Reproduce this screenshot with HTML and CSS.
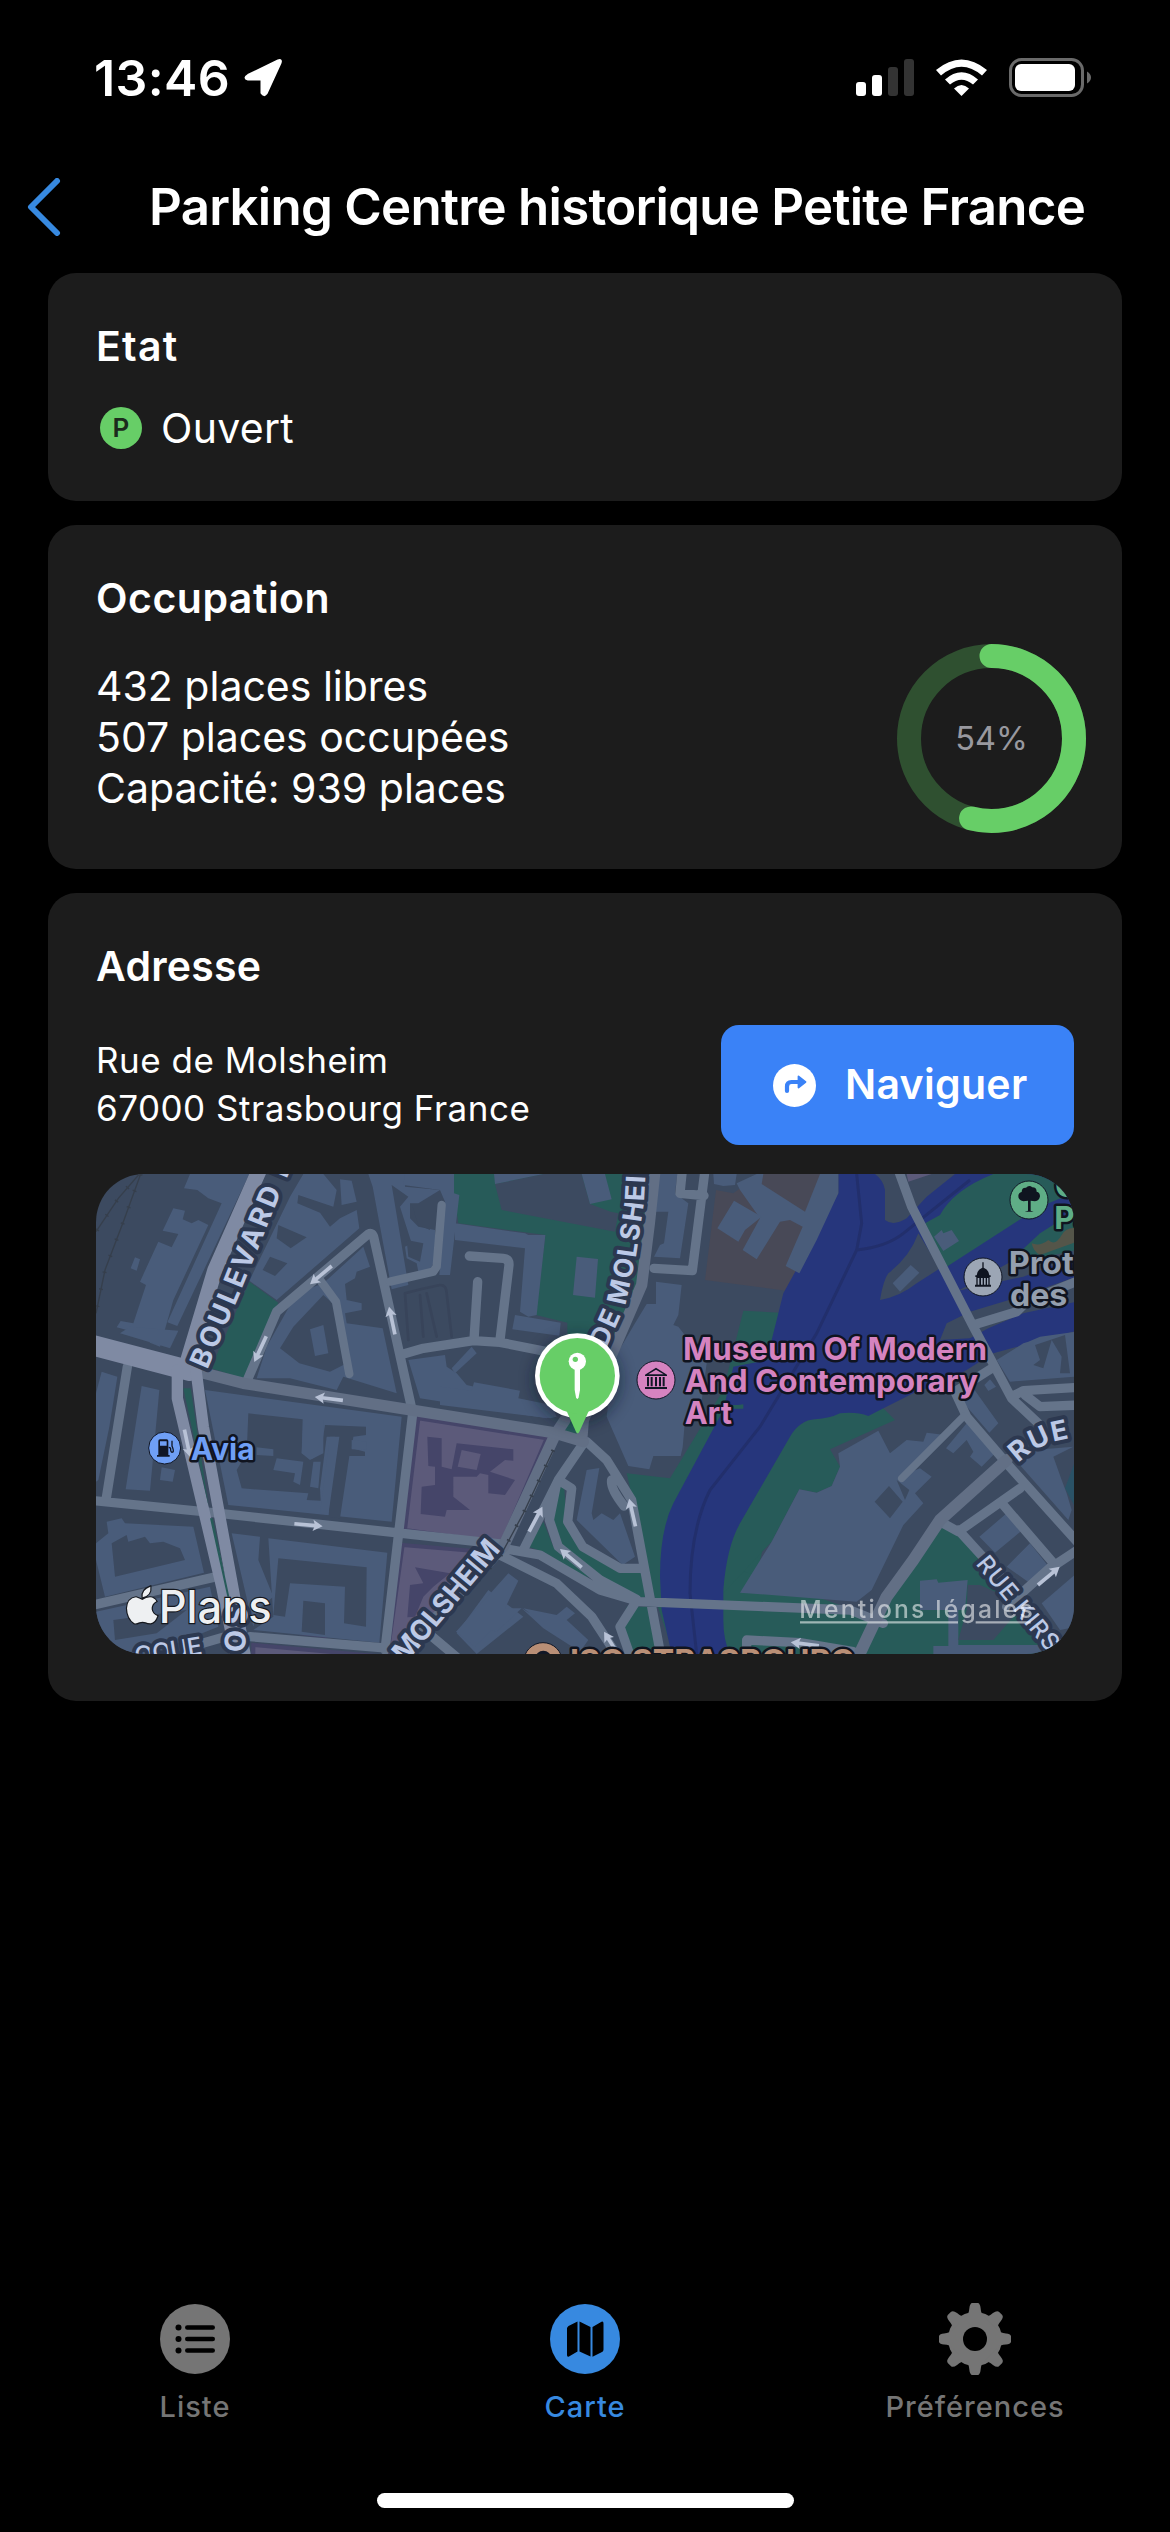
FILE: index.html
```html
<!DOCTYPE html>
<html lang="fr">
<head>
<meta charset="utf-8">
<title>Parking Centre historique Petite France</title>
<link rel="stylesheet" href="styles.css">
</head>
<body>
<header class="status">
  <div class="status-left">
    <span class="time">13:46</span>
    <svg class="location" viewBox="0 0 39 39"><path d="M4 17 34 2.500Q38 1 36.500 5L22.500 35.500Q20 39 17.500 35V21.500H4Q-1 20 4 17Z" fill="#fff" stroke="#fff" stroke-width="2" stroke-linejoin="round"/></svg>
  </div>
  <svg class="indicators" viewBox="0 0 236 40">
    <g fill="#fff"><rect x="0" y="24" width="10" height="14" rx="3"/><rect x="16" y="17" width="10" height="21" rx="3"/></g>
    <g fill="#333"><rect x="32" y="9" width="10" height="29" rx="3"/><rect x="48" y="1" width="10" height="37" rx="3"/></g>
    <g fill="#fff">
      <path d="M80 12Q105.500-9 131 12L126 17.500Q105.500 0 85 17.500Z"/>
      <path d="M89 21.500Q105.500 7 122 21.500L117 26.500Q105.500 17 94 26.500Z"/>
      <path d="M98 30.500Q105.500 23.500 113 30.500L105.500 38Z"/>
    </g>
    <rect x="154.500" y="1.500" width="72" height="36" rx="11" fill="none" stroke="#6a6a6a" stroke-width="3"/>
    <rect x="159" y="6" width="60" height="27" rx="6" fill="#fff"/>
    <path d="M231 13.500Q235 16 235 19.500T231 25.500Z" fill="#6a6a6a"/>
  </svg>
</header>

<nav class="navbar">
  <svg class="back" viewBox="0 0 34 58"><path d="M30 3 4 29 30 55" fill="none" stroke="#3789e0" stroke-width="6" stroke-linecap="round" stroke-linejoin="round"/></svg>
  <h1 class="title"><span>Parking Centre historique Petite France</span></h1>
</nav>

<main class="cards">
  <section class="card card-state">
    <h2 class="heading heading-state">Etat</h2>
    <div class="state">
      <span class="badge">P</span>
      <span class="state-label">Ouvert</span>
    </div>
  </section>

  <section class="card card-usage">
    <div class="usage">
      <h2 class="heading">Occupation</h2>
      <p class="figures">432 places libres<br>507 places occupées<br>Capacité: 939 places</p>
    </div>
    <div class="gauge">
      <svg viewBox="0 0 189 189">
        <circle cx="94.500" cy="94.500" r="82.500" fill="none" stroke="#2f5030" stroke-width="24"/>
        <circle cx="94.500" cy="94.500" r="82.500" fill="none" stroke="#67ce67" stroke-width="24" stroke-linecap="round" pathLength="100" stroke-dasharray="54 100" transform="rotate(-90 94.500 94.500)"/>
      </svg>
      <span class="gauge-value">54%</span>
    </div>
  </section>

  <section class="card card-address">
    <h2 class="heading heading-address">Adresse</h2>
    <div class="address-row">
      <p class="address">Rue de Molsheim<br>67000 Strasbourg France</p>
      <button class="navigate">
        <svg viewBox="0 0 43 43"><circle cx="21.500" cy="21.500" r="21.500" fill="#fff"/><path d="M14 27V22.500Q14 18 18.500 18H26" fill="none" stroke="#3a82f7" stroke-width="4.200" stroke-linecap="round"/><path d="M25.500 12.500 32.500 18 25.500 23.500Z" fill="#3a82f7" stroke="#3a82f7" stroke-width="1.800" stroke-linejoin="round"/></svg>
        <span>Naviguer</span>
      </button>
    </div>
    <svg class="map" viewBox="18 42 2934 1440">
      <defs>
        <g id="way"><path d="M-42 0H22" stroke="#b8c2d6" stroke-width="11" fill="none"/><path d="M14-17 43 0 14 17 20 0Z" fill="#b8c2d6"/></g>
        <filter id="soft" x="-50%" y="-50%" width="200%" height="200%"><feGaussianBlur stdDeviation="22"/></filter>
      </defs>
      <rect x="18" y="42" width="2934" height="1440" fill="#3c4a60"/>

      <!-- parks, water and campus areas -->
      <g fill="#275b59">
        <path d="M478 365 565 428 460 655 362 625Z"/>
        <g transform="translate(1050 0)">
          <path d="M42 42H640L600 400 520 600 382 520V488L288 465 316 225 55 190 42 100Z"/>
          <path d="M910 452 1090 462 1080 650 900 1480H700L640 1300 560 940 690 955 850 690Z"/>
          <path d="M345 985 372 975 380 1085 430 1170 540 1240 600 1235 625 1310 590 1315 490 1255 355 1155 330 1080Z"/>
          <path d="M265 1160 310 1085 340 1160 460 1255 420 1245 310 1175Z"/>
          <path d="M560 1340H640L670 1482H570L540 1400Z"/>
          <path d="M840 1250 900 1230 1300 1370V1482H840Z"/>
          <path d="M370 780 430 790 413 835 362 815Z"/>
        </g>
        <g transform="translate(1950 0)">
          <path d="M-60 1310 95 1145 178 988 230 998 275 978 300 920 270 868 465 780 430 745 340 700 0 900Z"/>
          <path d="M600 1095 660 1130 980 1482H350L440 1310Z"/>
        </g>
      </g>
      <g transform="translate(1050 0)" fill="#3c4a60">
        <path d="M165 72 310 42H425L450 132 512 155 535 160 525 215 185 150Z"/>
      </g>
      <g transform="translate(1950 0)">
        <path d="M-72 90-20 100 60 42H295V100L160 395-105 360Z" fill="#484957"/>
        <path d="M295 42V100L130 400 95 540 85 600-20 620-50 750-200 1030Q-240 1110-240 1250L-235 1350-205 1482H-30Q-50 1440-50 1380V1290Q-40 1160 0 1090L150 830Q180 780 225 778 270 775 300 760 350 755 385 768 480 720 520 700L640 655 760 580 1010 512V42Z" fill="#26367c"/>
        <path d="M350 42 365 190 350 270 230 520 60 800-90 990Q-150 1110-150 1300L-130 1482M350 270Q440 260 490 220L690 60" fill="none" stroke="#222f6c" stroke-width="9"/>
        <g fill="#3c4a60">
          <path d="M405 42H645L560 110 500 175Q460 200 435 180V90Q430 60 405 42Z"/>
          <path d="M535 220 600 325 530 370Q480 410 420 420 430 360 445 340 510 290 535 220Z"/>
          <path d="M600 540 620 490 690 455 840 410 1010 350V425L850 460 745 505 690 535Z"/>
          <path d="M655 392 840 290 1010 255V290L850 350Z"/>
        </g>
        <path d="M500 42H575L505 65Z" fill="#5c5a7a"/>
        <g fill="#275b59">
          <path d="M760 42H1010V95L900 140 620 320 555 190 600 165Q640 90 760 42Z"/>
          <path d="M830 285 900 220 1010 150V270L830 310Z"/>
        </g>
        <path d="M875 250Q900 260 925 240 945 260 965 225 980 200 1010 205V245L900 285Q880 275 875 250Z" fill="#545549"/>
        <path d="M-5 735 10 733V746L-55 746V735Z" fill="#275b59"/>
        <path d="M975 985 1010 890V1050Z" fill="#2a5266"/>
      </g>
      <g fill="#5c5a7a" stroke="#454569" stroke-width="12">
        <path d="M985 775 1370 835 1235 1150 945 1110Z"/>
        <path d="M938 1155 1235 1180 940 1500H890Z"/>
        <path d="M490 1455 880 1490H490Z"/>
      </g>
      <g fill="#454569">
        <path d="M1012 830 1055 835V920L1085 928 1100 850 1270 868V902L1245 900 1200 935 1275 960 1245 1005 1195 1000V945L1170 940 1160 950H1090V1010L1140 1050H1070L1065 1070 992 1062 995 980 1035 975V920L1015 918Z"/>
        <path d="M975 1222 1080 1240 1030 1280 1000 1310 975 1370 952 1372 960 1275 1000 1270Z"/>
        <path d="M630 1425 710 1400V1435ZM785 1395 825 1350V1398Z"/>
      </g>
      <path d="M1115 870 1172 882 1160 930 1103 920Z" fill="#5c5a7a"/>

      <!-- railway -->
      <path d="M148 42 85 115 18 215M152 42 102 180 45 330 18 460" fill="none" stroke="#363f4c" stroke-width="4"/>
      <path d="M148 42 85 115 18 215M152 42 102 180 45 330 18 460" fill="none" stroke="#363f4c" stroke-width="12" stroke-dasharray="4 48"/>

      <!-- buildings -->
      <g fill="#495c7a">
        <path d="M300 42H478L262 498 232 487 395 130 355 115 322 90 282 85Z"/>
        <path d="M250 145 285 152 278 178 305 190 325 180 355 195 250 420 210 560 180 548 165 525 80 502 92 483 130 490 168 375 150 365 205 245 245 262 265 222 218 212Z"/>
        <path d="M135 292 150 298 140 332 122 325Z"/>
        <path d="M120 500 265 512 240 565 90 520Z"/>
        <path d="M640 42H700L740 90 730 140 625 105 622 130 690 158 720 200 750 175 800 150 808 205 560 420 478 362 600 110Z"/>
        <path d="M750 58 785 62 800 125 755 135Z"/>
        <path d="M835 42H945V80L1050 90 985 130H960V175L985 200 1035 210 1040 290 1020 330 985 335 980 310 950 295 945 260 965 250 930 140 955 110 905 75 955 375 905 388 848 80Z"/>
        <path d="M945 42H1092V100L1108 105 1080 345 1048 345 1065 125 1050 90 940 75Z"/>
        <path d="M820 260 840 320 800 335 795 355 765 372 770 420 815 430V450L765 460 770 490 878 505 920 700 760 650 740 690 600 655 500 655 530 560 620 400 700 370Z"/>
        <path d="M955 600 1065 585 1070 620 1100 640 1130 675 1240 700 1380 760 1370 775 990 715Z"/>
        <path d="M1085 625 1145 560 1160 580 1095 640Z"/>
        <path d="M345 690 935 770 905 1085 415 1035Z"/>
        <path d="M35 635 82 650 58 800 25 960 18 965V700Z"/>
        <path d="M155 678 208 690 180 992 107 988Z"/>
        <path d="M215 922 255 930 248 965 210 960Z"/>
        <path d="M50 1085 95 1075 105 1090 310 1100 342 1238 45 1310 18 1200V1150L55 1120Z"/>
        <path d="M425 1120 510 1130 505 1200 550 1310 500 1350 490 1400Z"/>
        <path d="M535 1135 892 1178 868 1448 490 1410 550 1370Z"/>
        <path d="M18 1355 360 1280 385 1400 180 1482H60L18 1420Z"/>
        <path d="M1100 1420 1195 1290 1300 1370 1160 1482Z"/>
      </g>
      <g fill="#3c4a60">
        <path d="M475 760 638 778 635 880 665 897 692 880 705 795 828 800V825L790 830 785 865 825 875V888L778 888 750 1075 715 1070 735 830H710L690 985 692 1022 650 1020 655 1000 455 985 440 930 470 880Z"/>
        <path d="M565 195 650 232 602 265 560 235Z"/>
        <path d="M540 290 592 310 555 348 518 330Z"/>
        <path d="M610 500 700 405 740 440 770 610 720 635 628 610 570 565Z"/>
        <path d="M965 132H1020V210L985 195ZM950 240 1000 250 990 305 955 290Z"/>
        <path d="M65 1150 110 1125 115 1145 165 1130 180 1150 220 1145 270 1165 285 1200 75 1250Z"/>
        <path d="M565 1195 830 1222 828 1400 762 1390 765 1280 600 1270 585 1370 550 1365Z"/>
        <path d="M640 1322 705 1330V1425L635 1415Z"/>
        <path d="M70 1380 290 1350 200 1420 75 1440Z"/>
      </g>
      <g fill="#495c7a">
        <path d="M640 780H700V880L660 900 635 880ZM720 830H748L715 1065 690 1060ZM785 840 830 845V870L785 868ZM560 895 640 905 630 975 610 965 615 940 550 930ZM670 905H692L685 985 660 980ZM500 862 550 868V888L500 885Z"/>
        <path d="M660 508 700 495 715 580 675 588Z"/>
      </g>
      <g transform="translate(1050 0)" fill="#495c7a">
        <path d="M162 42H310L165 72ZM425 42H495L515 118 450 132Z"/>
        <path d="M45 190 255 220 265 225H316L290 465 265 470 240 455 255 265 45 240Z"/>
        <path d="M410 290 474 297 465 413 399 405Z"/>
        <path d="M225 465 362 488 358 527 217 508Z"/>
        <path d="M0 680 95 692 102 667 240 692 235 715 335 735 350 770 330 775 0 735Z"/>
        <path d="M650 42H712L705 100 745 130 720 295 642 290 660 255 672 250 685 155H640Z"/>
        <path d="M820 42H890L885 75 850 78 822 72Z"/>
        <path d="M648 365 725 375 715 465 700 495 715 500 800 610 780 760 735 780 728 862 722 888 640 888 628 928 565 918 500 770 520 600 585 490 620 432H648Z"/>
        <path d="M440 930 478 924 455 1060 460 1080 485 1060 520 1080 540 1060 585 1190 548 1215 410 1080Z"/>
        <path d="M205 1240 235 1262 195 1345 245 1345 270 1360 250 1345 350 1365 380 1340 405 1360 380 1380 445 1440 420 1475 310 1405 245 1345 170 1415 155 1410 105 1460 48 1415Z"/>
        <path d="M905 1298 1000 1205V1300Z"/>
      </g>
      <g transform="translate(1950 0)" fill="#495c7a">
        <path d="M60 42H295V100L230 240 178 340 137 318 188 200 150 180 120 185 50 298 8 270 60 175 0 90-10 70 50 42Z"/>
        <path d="M-18 122 65 170 15 210-5 245-68 205Z"/>
        <path d="M512 315 538 338 480 395 458 370Z"/>
        <path d="M582 230 605 210 610 220 635 210 657 243 610 273Z"/>
        <path d="M770 600 850 550 865 545 900 530 1010 515V650L810 665Z"/>
        <path d="M733 675 750 658 768 680 745 693ZM665 722 700 685 775 790 748 818Z"/>
        <path d="M415 812 450 880 500 840 550 845 560 818 615 825 490 945 540 925 575 950 525 1000 550 1030 490 1095 395 1290 350 1325 0 1298 95 1145 178 988 230 998 275 978 300 920 295 880Z"/>
        <path d="M680 790 765 880 725 920 690 890 700 875 680 840 640 880 618 865Z"/>
        <path d="M835 910 880 870 1000 860 940 890 965 960 980 1000 995 1050 985 1080Z"/>
        <path d="M800 1060 845 1112 765 1178 718 1130ZM870 1150 930 1225 870 1270 800 1220Z"/>
        <path d="M905 1330 1010 1240V1400L960 1410Z"/>
        <path d="M540 1262 590 1258 595 1268 683 1260 675 1350H540ZM625 1350H655V1455H900L960 1482H580V1458H625Z"/>
      </g>
      <g transform="translate(1950 0)" fill="#3c4a60">
        <path d="M447 978 488 1025 450 1075 404 1025ZM470 960 508 990 495 1020Z"/>
        <path d="M885 555 900 600 880 615 910 625 935 540 965 590 960 640 990 640 975 525Z"/>
        <path d="M683 1275 720 1275 820 1320 820 1370 760 1440 655 1440 680 1350Z"/>
        <path d="M70 42 65 72 195 155 240 42Z" fill="#484957"/>
      </g>

      <!-- streets -->
      <g class="streets" stroke="#65748a" stroke-width="28">
        <path d="M112 620 48 1020M10 1022 340 1055 1230 1152M968 760 885 1470M480 1430 900 1465M10 1335 370 1252M330 1452 400 1432"/>
        <path d="M470 665 560 455 835 222Q848 215 852 235L965 745M930 585 1000 565 1150 542 1230 547 1370 575M1163 365 1152 540M1230 540 1257 315Q1258 297 1240 295L1138 288"/>
        <path d="M690 360 738 425 778 642M1055 135 1040 320 1030 335 900 365" stroke-width="25"/>
        <path d="M955 540 945 400Q1000 385 1050 375 1070 375 1070 400L1085 530M990 405 1000 530M1010 400 1040 530" stroke="#38445a" stroke-width="8"/>
        <g transform="translate(1050 0)">
          <path d="M795 30 757 332 642 325M727 30 720 100 792 107M355 960 395 985 383 1085 428 1160 540 1225H600M350 970 328 1080 355 1160 480 1260 590 1318M190 1165 300 1185 480 1290 600 1325 1230 1350 1330 1390M180 1185 350 1270 455 1370 540 1500M585 1330 540 1400 575 1500M515 960Q510 985 552 1038M430 850 355 960 250 1170M440 845 500 900 575 1020 665 1500M920 1500V1440L1080 1448 1240 1475M-35 1420 60 1500"/>
          <path d="M645 30 628 190 605 375 430 780 425 840M375 780 345 825 190 1160-150 1520" stroke-width="34" stroke="#626f85"/>
        </g>
        <g transform="translate(1950 0)">
          <path d="M475 30 515 140 700 500 815 715 895 790M700 495 830 455 860 425 1020 360M755 625 645 695 680 770 800 910 1020 1155M825 705 850 692 1020 682M855 705 900 740 1020 735M600 1085 655 1115 840 985M655 1110 760 1225 1000 1500M790 1035 945 1215 1020 1165M945 1210 800 1340"/>
          <path d="M670 770 485 955" stroke-width="22"/>
          <path d="M800 900 600 1080 520 1200 440 1310 350 1500" stroke-width="36" stroke="#626f85"/>
        </g>
        <path d="M325 635 460 670 975 752 1390 818 1480 845" stroke-width="34" stroke="#626f85"/>
        <g stroke="#7f8aa3">
          <path d="M508 30 375 330 285 630" stroke-width="46"/>
          <path d="M5 555 300 632" stroke-width="62"/>
          <path d="M262 630V715L395 1280 440 1500M318 630 340 800 430 1290 468 1500" stroke-width="34"/>
        </g>
      </g>
      <path d="M280 685H302L356 1040ZM360 1075H368L418 1310H412Z" fill="#275b59"/>
      <path d="M1390 870 1300 1060 1230 1190 1050 1390 950 1482" fill="none" stroke="#363f4c" stroke-width="4"/>
      <path d="M1390 870 1300 1060 1230 1190 1050 1390 950 1482" fill="none" stroke="#363f4c" stroke-width="12" stroke-dasharray="5 45"/>

      <!-- one-way arrows -->
      <g>
        <use href="#way" transform="translate(693 345) rotate(140)"/>
        <use href="#way" transform="translate(511 567) rotate(115)"/>
        <use href="#way" transform="translate(717 716) rotate(187)"/>
        <use href="#way" transform="translate(906 482) rotate(-102)"/>
        <use href="#way" transform="translate(292 850) rotate(78)"/>
        <use href="#way" transform="translate(655 1095) rotate(5)"/>
        <use href="#way" transform="translate(1337 1078) rotate(-62)"/>
        <use href="#way" transform="translate(1443 1195) rotate(220)"/>
        <use href="#way" transform="translate(1627 1058) rotate(-103)"/>
        <use href="#way" transform="translate(1565 1452) rotate(-122)"/>
        <use href="#way" transform="translate(2876 1248) rotate(-40)"/>
        <use href="#way" transform="translate(2145 1452) rotate(187)"/>
      </g>

      <!-- street names -->
      <defs>
        <path id="p-boulevard" d="M352 630 450 400 548 158 630-40"/>
        <path id="p-molsheim-n" d="M498 566 555 440 588 290 612 130 622-60"/>
        <path id="p-rue-d" d="M835 910Q885 857 965 840 1010 830 1140 830"/>
      </defs>
      <g class="road-name">
        <text font-size="84"><textPath href="#p-boulevard" textLength="680">BOULEVARD D</textPath></text>
        <text font-size="80" transform="translate(1050 0)"><textPath href="#p-molsheim-n" textLength="615">DE MOLSHEIM</textPath></text>
        <text font-size="84" transform="translate(946 1512) rotate(-50)" textLength="448">MOLSHEIM</text>
        <text font-size="82" transform="translate(1950 0)"><textPath href="#p-rue-d" textLength="262">RUE D</textPath></text>
        <text font-size="86" transform="translate(464 1478) rotate(-86)" textLength="138">OS</text>
      </g>
      <g class="road-name minor">
        <text font-size="72" transform="translate(2656 1212) rotate(50.500)" textLength="345">RUE KIRS</text>
        <text font-size="74" transform="translate(138 1514) rotate(-9)" textLength="204">OQUE</text>
      </g>

      <!-- places -->
      <g class="place">
        <circle cx="224" cy="864" r="48" fill="#6f9ff5" stroke="#111726" stroke-width="3"/>
        <path d="M205 843Q205 838 210 838H230Q235 838 235 843V885H239V890H201V885H205ZM210 844V857H230V844Z" fill="#111726" fill-rule="evenodd"/>
        <path d="M236 862Q243 862 242 870 243 879 249 876 252 872 246 858V842" fill="none" stroke="#111726" stroke-width="4"/>
        <text x="302" y="900" font-size="92" fill="#6f9ff5" textLength="192" lengthAdjust="spacingAndGlyphs">Avia</text>

        <circle cx="1698" cy="660" r="57" fill="#d583c0" stroke="#111726" stroke-width="3"/>
        <path d="M1665 644 1698 623 1731 644V648H1665ZM1675 643H1721L1698 629ZM1671 651H1677V679H1671ZM1682 651H1688V679H1682ZM1695 651H1701V679H1695ZM1707 651H1713V679H1707ZM1718 651H1724V679H1718ZM1665 681H1731V687H1665Z" fill="#111726" fill-rule="evenodd"/>
        <g fill="#d583c0" font-size="94">
          <text x="1779" y="600" textLength="912" lengthAdjust="spacingAndGlyphs">Museum Of Modern</text>
          <text x="1784" y="695" textLength="880" lengthAdjust="spacingAndGlyphs">And Contemporary</text>
          <text x="1784" y="791" textLength="142" lengthAdjust="spacingAndGlyphs">Art</text>
        </g>

        <circle cx="2817" cy="120" r="57" fill="#5fad86" stroke="#111726" stroke-width="3"/>
        <path d="M2814 152V122L2800 124Q2784 120 2785 107 2786 98 2795 96 2795 82 2808 83 2817 74 2827 82 2840 82 2840 95 2850 97 2850 109 2848 122 2835 124L2822 122V152L2831 155H2804Z" fill="#0f1420"/>
        <g fill="#5fad86" font-size="94"><text x="2895" y="112">C</text><text x="2893" y="206">Parc</text></g>

        <circle cx="2679" cy="351" r="57" fill="#9ca6b5" stroke="#111726" stroke-width="3"/>
        <path d="M2677 307H2681V323Q2697 330 2698 346H2702V351H2699V374H2703V380H2655V374H2659V351H2656V346H2660Q2661 330 2677 323ZM2663 354V374H2668V354ZM2673 354V374H2678V354ZM2682 354V374H2687V354ZM2691 354V374H2695V354Z" fill="#0f1420" fill-rule="evenodd"/>
        <g fill="#949fae" font-size="94"><text x="2756" y="342" textLength="345" lengthAdjust="spacingAndGlyphs">Protect</text><text x="2760" y="437" textLength="172" lengthAdjust="spacingAndGlyphs">des</text></g>

        <circle cx="1359" cy="1506" r="58" fill="#b98f76" stroke="#111726" stroke-width="3"/>
        <circle cx="1360" cy="1496" r="24" fill="#111726"/>
        <text x="1440" y="1536" font-size="94" fill="#b98f76" textLength="854" lengthAdjust="spacingAndGlyphs">ISG STRASBOURG</text>
      </g>

      <!-- parking marker -->
      <circle cx="1462" cy="660" r="130" fill="#101828" opacity=".55" filter="url(#soft)"/>
      <circle cx="1462" cy="647" r="127" fill="#fff"/>
      <path d="M1426 745H1500L1468 815Q1463 824 1458 815Z" fill="#67ce67"/>
      <circle cx="1462" cy="647" r="113" fill="#67ce67"/>
      <circle cx="1462" cy="604" r="26" fill="#fff"/>
      <path d="M1454 624H1470V690L1466 712Q1462 722 1458 712L1454 690Z" fill="#fff"/>
      <circle cx="1456" cy="598" r="8" fill="#67ce67"/>

      <!-- attribution -->
      <g class="brand">
        <path d="M181 1280Q184 1305 158 1312 155 1290 181 1280ZM157 1320Q168 1312 180 1312 193 1313 199 1324 184 1332 185 1348 187 1362 202 1368 195 1388 182 1390 172 1390 167 1387 158 1384 148 1387 140 1391 133 1390 112 1376 111 1345 113 1315 138 1312 148 1315 157 1320Z"/>
        <text x="206" y="1388" font-size="136" textLength="339" lengthAdjust="spacingAndGlyphs">Plans</text>
      </g>
      <g class="legal">
        <text x="2128" y="1373" font-size="74" textLength="700">Mentions légales</text>
        <path d="M2130 1387H2604M2657 1387H2822" stroke="#fff" stroke-width="7"/>
      </g>
    </svg>
  </section>
</main>

<footer class="tabs">
  <a class="tab">
    <svg viewBox="0 0 72 72"><circle cx="36" cy="36" r="35" fill="#757575"/><g fill="#000"><circle cx="19.500" cy="24.500" r="3"/><circle cx="19.500" cy="36" r="3"/><circle cx="19.500" cy="47.500" r="3"/><rect x="26" y="22.200" width="30" height="4.600" rx="2.300"/><rect x="26" y="33.700" width="30" height="4.600" rx="2.300"/><rect x="26" y="45.200" width="30" height="4.600" rx="2.300"/></g></svg>
    <span>Liste</span>
  </a>
  <a class="tab active">
    <svg viewBox="0 0 72 72"><circle cx="36" cy="36" r="35" fill="#3789e0"/><path d="M18 25.500Q18 24 19.500 23L28.500 18.500V48.500L20 53.500Q18 54.500 18 52ZM30.500 18.500 41.500 24V53.500L30.500 48.500ZM43.500 24 52.500 18.800Q54.500 18 54.500 20.500V46.500Q54.500 48 53.500 48.800L43.500 53.800Z" fill="#000"/></svg>
    <span>Carte</span>
  </a>
  <a class="tab">
    <svg viewBox="0 0 72 72">
      <g fill="#757575">
        <circle cx="36" cy="36" r="27"/>
        <path id="tooth" d="M27 14Q30 11 30.400 5 31-.2 34-.2H38Q41-.2 41.600 5 42 11 45 14Z"/>
        <use href="#tooth" transform="rotate(45 36 36)"/><use href="#tooth" transform="rotate(90 36 36)"/><use href="#tooth" transform="rotate(135 36 36)"/><use href="#tooth" transform="rotate(180 36 36)"/><use href="#tooth" transform="rotate(225 36 36)"/><use href="#tooth" transform="rotate(270 36 36)"/><use href="#tooth" transform="rotate(315 36 36)"/>
      </g>
      <circle cx="36" cy="36" r="12" fill="#000"/>
    </svg>
    <span>Préférences</span>
  </a>
</footer>
<div class="home"><div class="home-bar"></div></div>
</body>
</html>
```
FILE: styles.css
```css
* { box-sizing: border-box; margin: 0; padding: 0; }

body {
  width: 1170px;
  height: 2532px;
  display: flex;
  flex-direction: column;
  overflow: hidden;
  background: #000;
  color: #fff;
  font-family: Inter, "Liberation Sans", sans-serif;
}

svg { display: block; flex: none; }
span { white-space: nowrap; }

.status {
  height: 141px;
  padding: 14px 78px 0 94px;
  display: flex;
  align-items: center;
  justify-content: space-between;
}
.status-left { display: flex; align-items: center; gap: 14px; }
.time { font-size: 50px; font-weight: 600; line-height: 60px; letter-spacing: .4px; }
.location { width: 39px; height: 39px; }
.indicators { width: 236px; height: 40px; }

.navbar {
  height: 132px;
  padding: 0 27px;
  display: flex;
  align-items: center;
}
.back { width: 34px; height: 58px; }
.title {
  margin-left: 88px;
  font-size: 51px;
  font-weight: 600;
  line-height: 60px;
  letter-spacing: -.74px;
}

.cards {
  flex: 1;
  padding: 0 48px;
  display: flex;
  flex-direction: column;
  gap: 24px;
}
.card {
  background: #1c1c1c;
  border-radius: 28px;
  padding: 48px 48px 0;
}
.heading { font-size: 41px; font-weight: 600; line-height: 50px; letter-spacing: .5px; }
.heading-state { letter-spacing: 1.2px; }
.heading-address { letter-spacing: .2px; }

.card-state { height: 228px; }
.state { display: flex; align-items: center; gap: 19px; margin-top: 32px; padding-left: 4px; }
.badge {
  width: 42px;
  height: 42px;
  border-radius: 50%;
  background: #67ce67;
  color: #1c2b1c;
  font-size: 26px;
  font-weight: 600;
  line-height: 42px;
  text-align: center;
}
.state-label { font-size: 41px; line-height: 50px; letter-spacing: .3px; }

.card-usage { height: 344px; display: flex; justify-content: space-between; padding-right: 36px; }
.figures { margin-top: 38px; font-size: 41px; line-height: 51px; }
.gauge { width: 189px; height: 189px; margin-top: 71px; display: grid; place-items: center; }
.gauge > * { grid-area: 1 / 1; }
.gauge svg { width: 189px; height: 189px; }
.gauge-value { font-size: 32.5px; color: #98989f; padding-bottom: 1px; }

.card-address { height: 808px; }
.address-row { display: flex; align-items: center; justify-content: space-between; margin-top: 34px; }
.address { font-size: 35px; line-height: 48px; letter-spacing: .5px; padding-bottom: 3px; }
.navigate {
  width: 353px;
  height: 120px;
  display: flex;
  align-items: center;
  padding-left: 52px;
  gap: 29px;
  border: 0;
  border-radius: 18px;
  background: #3a82f7;
  color: #fff;
  font: 600 41px/50px Inter, "Liberation Sans", sans-serif;
  letter-spacing: .3px;
}
.navigate svg { width: 43px; height: 43px; }
.navigate span { padding-bottom: 2px; }

.map { width: 978px; height: 480px; margin-top: 29px; border-radius: 48px; }
.streets { fill: none; stroke-linecap: round; stroke-linejoin: round; }
.road-name text {
  font-weight: 700;
  fill: #bcc9e6;
  stroke: #2c3850;
  stroke-width: 24px;
  stroke-linejoin: round;
  paint-order: stroke;
}
.road-name.minor text { font-weight: 500; }
.place text {
  font-weight: 700;
  stroke: #10141f;
  stroke-width: 15px;
  stroke-linejoin: round;
  paint-order: stroke;
}
.brand { fill: #eef0f2; stroke: #15181e; stroke-width: 7px; paint-order: stroke; font-weight: 500; }
.legal { fill: #fff; opacity: .55; font-weight: 500; }

.tabs { height: 142px; display: flex; }
.tab {
  width: 390px;
  display: flex;
  flex-direction: column;
  align-items: center;
  gap: 14px;
  color: #757575;
  font-size: 29px;
  font-weight: 500;
  line-height: 36px;
  letter-spacing: 1px;
}
.tab svg { width: 72px; height: 72px; }
.tab.active { color: #3789e0; }

.home { height: 87px; padding-top: 48px; display: flex; justify-content: center; }
.home-bar { width: 417px; height: 15px; border-radius: 8px; background: #fff; }
```
